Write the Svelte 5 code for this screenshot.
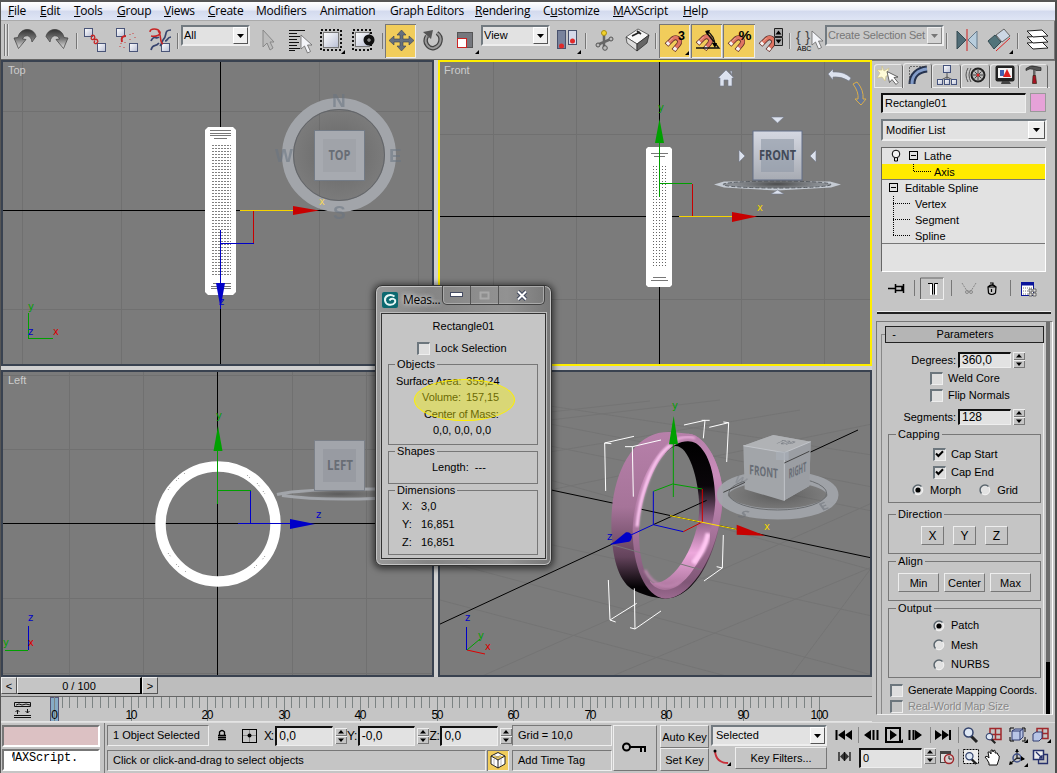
<script>
  const menus = [
    ['F', 'ile', 32], ['E', 'dit', 34], ['T', 'ools', 43], ['G', 'roup', 47], ['V', 'iews', 44],
    ['C', 'reate', 48], ['', 'Modifiers', 64], ['', 'Animation', 70], ['', 'Graph Editors', 85],
    ['R', 'endering', 68], ['C', 'ustomize', 70, 'u'], ['M', 'AXScript', 70], ['H', 'elp', 40]
  ];
  const frames = Array.from({ length: 101 }, (_, i) => i);
  const marks = [0, 10, 20, 30, 40, 50, 60, 70, 80, 90, 100];
  const fx = (f) => 54.5 + Math.round(f * 7.65);
</script>

{#snippet spin()}
  <span class="spin"><svg width="12" height="8" viewBox="0 0 12 8"><path d="M6 2 9 5.500H3z" /></svg><svg width="12" height="8" viewBox="0 0 12 8"><path d="M3 2.500h6L6 6z" /></svg></span>
{/snippet}
{#snippet check(on)}
  <span class="check">{#if on}<svg width="9" height="9" viewBox="0 0 9 9"><path d="M1 3.5 3.4 6 8 1.3" fill="none" stroke="#000" stroke-width="2" /></svg>{/if}</span>
{/snippet}
{#snippet radio(on)}
  <svg class="radio" width="12" height="12" viewBox="0 0 12 12"><circle cx="6" cy="6" r="4.8" fill="#e2e2e2" stroke="#f5f5f5" /><path d="M2.5 9.5A4.9 4.9 0 0 1 9.5 2.5" fill="none" stroke="#59646c" stroke-width="1.5" />{#if on}<circle cx="6" cy="6" r="2.6" />{/if}</svg>
{/snippet}
{#snippet drop(label, cls)}
  <div class="combo {cls}"><span>{label}</span><i><svg width="7" height="4" viewBox="0 0 7 4"><path d="M0 0h7L3.5 4z" /></svg></i></div>
{/snippet}
{#snippet sep(x)}
  <svg width="6" height="38" viewBox="{x} 21 6 38"><path d="M{x + 2.5} 33v16" stroke="#777" /><path d="M{x + 3.5} 33v16" stroke="#ddd" /></svg>
{/snippet}
{#snippet magnet(x, y)}
  <g transform="translate({x} {y})" fill="none"><path d="M2.500 8 8.500 2C12.500-1.500 18 3 14.500 7.500L9.500 13.500" stroke="#5c2d28" stroke-width="5" /><path d="M3 7.500 8.500 2C12.500-1.500 18 3 14.500 7.500L10 13" stroke="#df7462" stroke-width="3.400" /><path d="m3 7.500 2-2M10 13l2-2.400" stroke="#f4f4f4" stroke-width="3.400" /><path d="M5 4.500 8.500 1" stroke="#f4b09e" /></g>
{/snippet}
{#snippet arrow(x, y)}
  <path transform="translate({x} {y})" d="M0 0v14l3.500-3 3 7 3-1.500-3-6.500H11z" fill="#f3f4f8" stroke="#666" stroke-width=".8" />
{/snippet}
{#snippet box(x, y)}
  <rect {x} {y} width="8" height="8" fill="url(#pane)" stroke="#4a5578" />
{/snippet}
{#snippet zoomglass(x, y)}
  <g transform="translate({x} {y})"><path d="m8 9 6 6" stroke="#222" stroke-width="3" /><circle cx="5.500" cy="5.500" r="4.500" fill="#dfe8f4" stroke="#33436d" stroke-width="1.500" /></g>
{/snippet}

<main>
  <nav>
    {#each menus as m}
      <span style="width:{m[2]}px">{#if m[3]}C<u>u</u>stomize{:else}<u>{m[0]}</u>{m[1]}{/if}</span>
    {/each}
  </nav>

  <div class="toolbar">
    <svg width="10" height="38" viewBox="1 21 10 38">
      <defs>
        <linearGradient id="steel" x1="0" y1="0" x2="0" y2="1"><stop offset="0" stop-color="#333" /><stop offset=".5" stop-color="#777" /><stop offset="1" stop-color="#e4e4e4" /></linearGradient>
        <linearGradient id="pane" x1="0" y1="0" x2="1" y2="1"><stop offset="0" stop-color="#fff" /><stop offset="1" stop-color="#b9bfd4" /></linearGradient>
      </defs>
      <path d="M4.500 24v32M7.500 24v32" stroke="#777" /><path d="M5.500 24v32M8.500 24v32" stroke="#e2e2e2" />
    </svg>
    <svg width="31" height="38" viewBox="11 21 31 38"><path d="M14 38 18.500 48.500 26 39.500 22.500 39C24 34.500 31 34 32 42L36 36.500C34 27 20 27 18 37.500Z" fill="url(#steel)" stroke="#3c3c3c" stroke-width=".7" /></svg>
    <svg width="32" height="38" viewBox="42 21 32 38"><path d="M68 38 63.500 48.500 56 39.500 59.500 39C58 34.500 51 34 50 42L46 36.500C48 27 62 27 64 37.500Z" fill="url(#steel)" stroke="#3c3c3c" stroke-width=".7" /></svg>
    {@render sep(74)}
    <svg width="31" height="38" viewBox="80 21 31 38">{@render box(84.5, 28.5)}{@render box(97.5, 43.5)}<path d="M91 36c3-2 5 1 3 3s-4-1-2-2M94 40c3-2 5 1 3 3s-4-1-2-2" fill="none" stroke="#c72525" stroke-width="1.300" /></svg>
    <svg width="32" height="38" viewBox="111 21 32 38">{@render box(116.5, 28.5)}{@render box(129.5, 43.5)}<path d="M122 42c-1-4 0-6 4-6" fill="none" stroke="#c72525" stroke-width="2" /><path d="M130 34v1m3-2v1m2 3v1m-5 1v1m-9 3v1m4-2v1m-5 3v1m4 0v1" stroke="#c96a6a" stroke-width="1.500" /></svg>
    <svg width="32" height="38" viewBox="143 21 32 38">{@render box(161.5, 43.5)}<path d="M151 50c2-7 4-2 8-7M151 41c3-7 5-1 8-4M171 30c-8 0-3 6-8 10-2 3-1 4-3 6M171 37c-4 0-3 4-6 4" fill="none" stroke="#37446e" stroke-width="1.700" /><path d="M150 32c0-4 8-4 10 0 1 3-4 5-9 4M158 31c4 3 1 11 5 13" fill="none" stroke="#c72525" stroke-width="1.500" /></svg>
    {@render sep(175)}
    {@render drop('All', 'c69')}
    <svg width="34" height="38" viewBox="250 21 34 38"><path d="M263 30v17l4-4 3 7 3-2-3-6h4z" fill="#bcbcbc" stroke="#888" /></svg>
    <svg width="31" height="38" viewBox="284 21 31 38"><path d="M289 30.500h16M289 33.500h8M289 36.500h11M289 39.500h8M289 42.500h10M289 45.500h8M289 48.500h11M289 50.500h6" stroke="#111" />{@render arrow(301, 35)}</svg>
    <svg width="33" height="38" viewBox="315 21 33 38"><rect x="321" y="30" width="20" height="20" fill="none" stroke="#111" stroke-width="2" stroke-dasharray="2 2" /><rect x="323.500" y="32.500" width="15" height="15" fill="url(#pane)" stroke="#777" /><path d="M345 50v4h-4z" /></svg>
    <svg width="32" height="38" viewBox="348 21 32 38"><rect x="353" y="30" width="18" height="20" fill="none" stroke="#111" stroke-width="2" stroke-dasharray="2 2" /><rect x="355.500" y="32.500" width="14" height="14" fill="url(#pane)" stroke="#777" /><circle cx="369" cy="40" r="3.500" fill="#ccc" stroke="#111" stroke-width="4" /><circle cx="369" cy="40" r="1.500" fill="#888" /></svg>
    <span class="thinsep"></span>
    <svg class="on" width="31" height="34" viewBox="385 24 31 34"><path d="M401.500 30l4.500 5h-3v4h6v-3l5 4.500-5 4.500v-3h-6v4h3l-4.500 5-4.500-5h3v-4h-6v3l-5-4.500 5-4.500v3h6v-4h-3z" fill="#66707e" stroke="#3a4250" stroke-width=".6" /></svg>
    <svg width="33" height="38" viewBox="416 21 33 38"><path d="M427 36C423 43 429 49 434 48 441 46 443 37 437 33" fill="none" stroke="#444" stroke-width="4.500" /><path d="M427 36C423 43 429 49 434 48 441 46 443 37 437 33" fill="none" stroke="#999" stroke-width="2" /><path d="m423 32 10-2-2 9z" fill="#555" /></svg>
    <svg width="32" height="38" viewBox="449 21 32 38"><rect x="457.500" y="32.500" width="15" height="15" fill="#75777d" stroke="#555" /><rect x="457.500" y="38.500" width="9" height="9" fill="#fff" stroke="#c22" /><path d="M479 50v4h-4z" /></svg>
    {@render drop('View', 'c69')}
    <svg width="33" height="38" viewBox="550 21 33 38"><rect x="557.500" y="30.500" width="8" height="18" fill="#79839c" stroke="#48516c" /><rect x="568.500" y="30.500" width="8" height="14" fill="#d6daea" stroke="#48516c" /><circle cx="561.500" cy="46" r="2.500" fill="#e02a2a" /><circle cx="572.500" cy="41" r="2.500" fill="#e02a2a" /><path d="M581 50v4h-4z" /></svg>
    {@render sep(583)}
    <svg width="30" height="38" viewBox="589 21 30 38"><path d="M604 34v14M597 45l14-6" stroke="#666" stroke-width="2.500" /><g fill="#bbb" stroke="#555"><circle cx="598" cy="45" r="2" /><circle cx="611" cy="39" r="2" /><circle cx="605" cy="48" r="2.300" /></g><circle cx="604" cy="33" r="2.500" fill="#f2d32c" stroke="#a98e17" /></svg>
    <svg width="34" height="38" viewBox="619 21 34 38"><path d="m626 37 12-8 11 6-12 9z" fill="#f8f8f8" stroke="#333" stroke-width=".7" /><path d="M626 37 637 44V51L627 43z" fill="#ddd" stroke="#333" stroke-width=".7" /><path d="m637 44 12-9-2 8-10 8z" fill="#666" stroke="#222" stroke-width=".7" /><path d="m632 36 8-4m-3-1 4 3" stroke="#222" stroke-width="1.700" /></svg>
    {@render sep(653)}
    <svg class="on" width="31" height="34" viewBox="659 24 31 34">{@render magnet(664, 37)}<text x="678" y="40" class="bold" font-size="12.500">3</text><path d="M689 51v4h-4z" /></svg>
    <svg class="on" width="31" height="34" viewBox="691 24 31 34">{@render magnet(695, 36)}<path d="M696 48h23L706 32M707 31q8 5 8 15" fill="none" stroke="#111" stroke-width="1.300" /><path d="m705 31 5-1-2 5zM712 43h5l-2 5z" /></svg>
    <svg class="on" width="32" height="34" viewBox="723 24 32 34">{@render magnet(727, 37)}<text x="738.500" y="40" class="bold" font-size="13" textLength="13" lengthAdjust="spacingAndGlyphs">%</text></svg>
    <svg width="32" height="38" viewBox="755 21 32 38">{@render magnet(758, 37)}<path d="M774.500 28.500h8v8h-8zM774.500 37.500h8v8h-8z" fill="#aaa" stroke="#222" /><path d="m778.500 30.500 3 4h-6zM778.500 43.500l3-4h-6z" /></svg>
    {@render sep(787)}
    <svg width="32" height="38" viewBox="793 21 32 38"><text x="796" y="42" font-size="14" textLength="14" class="plain" fill="#444">&#123; &#125;</text><text x="797" y="51" font-size="7" class="plain">ABC</text>{@render arrow(812, 31)}</svg>
    {@render drop('Create Selection Set', 'c119')}
    {@render sep(944)}
    <svg width="32" height="38" viewBox="950 21 32 38"><path d="M957 31v18l9-9z" fill="#506c76" stroke="#354b52" /><path d="M977 31v18l-9-9z" fill="#b8cddd" stroke="#65798a" /><path d="M967 29v22" stroke="#c44" stroke-width="1.300" /></svg>
    <svg width="33" height="38" viewBox="982 21 33 38"><path d="m988 41 7-6 6 7-7 7z" fill="#51737a" stroke="#354b52" /><path d="m996 35 8-6 6 7-8 6z" fill="#ccd7e4" stroke="#666" /><path d="m996 51 14-13" stroke="#d22" /><path d="M1013 50v4h-4z" /></svg>
    {@render sep(1015)}
    <svg width="33" height="38" viewBox="1021 21 33 38"><g fill="#fff" stroke="#222"><path d="m1027 43 15-1 6 6-15 1z" /><path d="m1027 37 15-1 6 6-15 1z" /><path d="m1027 31 15-1 6 6-15 1z" /></g></svg>
  </div>

  <div class="middle">
    <div class="left">
      <div class="views">
        <svg class="view" width="433" height="306" viewBox="1 60 433 306">
          <defs>
            <pattern id="dots" x="211" width="3" height="3" patternUnits="userSpaceOnUse"><rect width="3" height="3" fill="#fff" /><rect x="1" y="1" width="2" height="1" fill="#808080" /></pattern>
            <pattern id="dots2" x="652" width="3" height="3" patternUnits="userSpaceOnUse"><rect width="3" height="3" fill="#fff" /><rect x="1" y="1" width="1" height="1" fill="#666" /></pattern>
            <linearGradient id="cube" x1="0" y1="0" x2="0" y2="1"><stop offset="0" stop-color="#d5d8e2" /><stop offset="1" stop-color="#a7abb3" /></linearGradient>
            <radialGradient id="shade"><stop offset="0" stop-color="#333" stop-opacity=".75" /><stop offset="1" stop-color="#444" stop-opacity="0" /></radialGradient>
          </defs>
          <path class="grid" d="M22.500 60v306M121.500 60v306M319.500 60v306M418.500 60v306M1 111.500h433M1 309.500h433" />
          <path class="axis" d="M220.500 60v306M1 210.500h433" />
          <path d="M208 127h25l3 3v162l-3 3h-25l-3-3V130z" fill="#fff" />
          <rect x="211" y="144" width="20" height="132" fill="url(#dots)" />
          <path d="M210 130.500h21M210 133.500h21M210 135.500h21M214 138.500h13M213 283.500h18M211 286.500h20M211 288.500h20" stroke="#777" />
          <circle cx="339" cy="155" r="51.500" fill="none" stroke="#a2a5aa" stroke-width="11" /><circle cx="339" cy="155" r="45.500" fill="none" stroke="#62656a" />
          <circle cx="339" cy="155" r="45" fill="url(#shade)" opacity=".45" />
          <rect x="314.500" y="130.500" width="50" height="50" fill="#a7aab0" stroke="#737b86" /><rect x="323" y="139" width="33" height="33" fill="#a0a3a9" />
          <text class="cubet" x="328.500" y="160" textLength="22" lengthAdjust="spacingAndGlyphs">TOP</text>
          <g class="compass"><text x="332" y="107">N</text><text x="275" y="162">W</text><text x="389" y="162">E</text><text x="333" y="219">S</text></g>
          <path d="M240 210.500h55" stroke="#f5d400" /><path d="M293 206v9l26-4.500z" fill="#c80000" /><path d="M253.500 211v32" stroke="#c80000" /><path d="M221 243.500h33" stroke="#0000c8" />
          <path d="M220.500 230v79" stroke="#0000c8" /><path d="M216 283h9l-4.500 25z" fill="#0000c8" />
          <text class="ax" x="319" y="205" fill="#f1d55a">x</text><text class="ax" x="219" y="305" fill="#0000c8">z</text>
          <path d="M28.500 313v26" stroke="#00a000" /><path d="M28 338.500h25" stroke="#00a000" /><text class="ax" x="28" y="310" fill="#00a000">y</text><text class="ax" x="53" y="335" fill="#d00">x</text><text class="ax" x="28" y="335" fill="#0000c8">z</text>
          <text class="vl" x="8" y="74">Top</text>
          <rect x="2" y="61" width="431" height="304" class="edge" />
        </svg>
        <svg class="view" width="434" height="306" viewBox="438 60 434 306">
          <path class="grid" d="M493.500 60v306M576.500 60v306M741.500 60v306M824.500 60v306M438 134.500h434M438 299.500h434" />
          <path class="axis" d="M659.500 60v306M438 216.500h434" />
          <path d="M648 147h22l2 2v136l-2 2h-22l-2-2V149z" fill="#fff" /><rect x="652" y="166" width="16" height="102" fill="url(#dots2)" />
          <path d="M651 153.500h17M654 156.500h11M653 277.500h13M651 280.500h17" stroke="#777" />
          <path d="m714 184.500 10-3h106l11 3-10 3-54 3-53-3z" fill="#c5cbd3" /><ellipse cx="777" cy="184.500" rx="54" ry="3.500" fill="#8b8f94" stroke="#5b6066" stroke-dasharray="4 2" /><ellipse cx="777" cy="184" rx="44" ry="5" fill="url(#shade)" />
          <rect x="753" y="131" width="49" height="49" fill="url(#cube)" stroke="#636f88" /><rect x="761" y="139" width="33" height="33" fill="#929ba9" opacity=".65" />
          <text class="cubet hot" x="759" y="160" textLength="37" lengthAdjust="spacingAndGlyphs">FRONT</text>
          <g fill="#dce2ee" stroke="#747b8b" stroke-width=".6"><path d="M771 117h13l-6.500 6zM771 194h13l-6.500-4zM739 150v12l6-6zM816 150v12l-6-6z" /><path d="m718 78 8-8 8 8h-2v8h-4v-6h-4v6h-4v-8zM730 71h2v4z" /><path d="m828 74 5-5v3q11-1 18 6l-2 3q-8-5-16-4v3z" /></g>
          <path d="m853 84 4-2q7 8 6 17h3l-5 6-6-6h3q1-7-5-15z" fill="#667796" stroke="#dcae48" />
          <path d="M659.500 127v70" stroke="#00a000" /><path d="M659.500 119 664 143h-9z" fill="#00a000" /><path d="M660 183.500h32" stroke="#00a000" /><path d="M692.500 184v32" stroke="#c80000" /><path d="M679 216.500h55" stroke="#f5d400" /><path d="M732 212v10l25-5.500z" fill="#c80000" />
          <text class="ax" x="658" y="111" fill="#00a000">y</text><text class="ax" x="757" y="211" fill="#f1d500">x</text>
          <text class="vl" x="444" y="74">Front</text>
          <rect x="439" y="61" width="432" height="304" class="edge active" />
        </svg>
        <svg class="view" width="433" height="307" viewBox="1 370 433 307">
          <path class="grid" d="M69.500 370v307M143.500 370v307M292.500 370v307M366.500 370v307M1 375.500h433M1 449.500h433M1 598.500h433M1 673.500h433" />
          <path class="axis" d="M217.500 370v307M1 523.500h433" />
          <circle cx="218" cy="524" r="57.500" fill="none" stroke="#fff" stroke-width="10.500" />
          <path d="m168 490 2-3m6-6 4-4m4-3 2-2M247 475l3 3m7 5 3 4m3 4 2 3M168 553l3 4m5 7 4 4m5 3 2 2M265 556l-3 4m-5 5-4 4" stroke="#888" stroke-dasharray="1 2" />
          <path d="M277 494.500Q300 489 375 489M282 495.500q35 5 93 3" fill="none" stroke="#a2a5aa" stroke-width="3" /><ellipse cx="339" cy="494" rx="42" ry="5" fill="url(#shade)" opacity=".6" />
          <rect x="314.500" y="440.500" width="50" height="50" fill="#a2a5ab" stroke="#7b8088" /><rect x="323" y="449" width="33" height="33" fill="#989ba2" />
          <text class="cubet" x="327" y="470" textLength="26" lengthAdjust="spacingAndGlyphs">LEFT</text>
          <path d="M217.500 437v67M218 490.500h33" stroke="#00a000" /><path d="M218 426l4.500 25h-9z" fill="#00a000" /><path d="M250.500 491v32M238 523.500h55" stroke="#0000c8" /><path d="M290 519v10l25-5z" fill="#0000c8" />
          <text class="ax" x="216" y="419" fill="#00a000">y</text><text class="ax" x="316" y="518" fill="#0000c8">z</text>
          <path d="M28.500 626v24" stroke="#0000c8" /><path d="M5 650.500h23" stroke="#00a000" /><text class="ax" x="28" y="621" fill="#0000c8">z</text><text class="ax" x="3" y="646" fill="#00a000">y</text><text class="ax" x="28" y="646" fill="#d00">x</text>
          <text class="vl" x="8" y="384">Left</text>
          <rect x="2" y="371" width="431" height="305" class="edge" />
        </svg>
        <svg class="view" width="434" height="307" viewBox="438 370 434 307">
          <defs>
            <linearGradient id="band" x1="0" y1="0" x2="0" y2="1"><stop offset="0" stop-color="#b780aa" /><stop offset=".45" stop-color="#a67499" /><stop offset=".75" stop-color="#63435b" /><stop offset=".93" stop-color="#050305" /></linearGradient>
            <linearGradient id="inner" x1="0" y1="0" x2="0" y2="1"><stop offset="0" stop-color="#000" /><stop offset=".3" stop-color="#0a060a" /><stop offset=".5" stop-color="#82587a" /><stop offset=".75" stop-color="#eda8dc" /><stop offset="1" stop-color="#a87299" /></linearGradient>
            <linearGradient id="rim" x1="0" y1="0" x2="0" y2="1"><stop offset="0" stop-color="#b780aa" /><stop offset=".25" stop-color="#c98dbb" /><stop offset=".6" stop-color="#a6739a" /><stop offset=".9" stop-color="#805777" /><stop offset="1" stop-color="#9c6a90" /></linearGradient>
            <filter id="soft"><feGaussianBlur stdDeviation="3" /></filter>
          </defs>
          <path class="grid faint" d="M550 406 872 455M550 424 872 487M550 446 872 511M550 480 872 570M440 520 872 616M440 560 872 675M440 600 730 677M550 420 720 400M550 452 800 410M550 490 872 424M480 677 872 503M610 677 872 567M790 677 872 567M550 412 650 401" />
          <path class="axis" d="M438 625 858 430M438 466 872 558" />
          <g transform="translate(590 390) scale(.33333)">
            <path d="M64 400C64 260 120 150 205 129 240 122 270 130 295 131 350 135 395 230 398 310 398 450 330 625 225 626 190 624 150 612 125 597 85 570 64 500 64 400Z" fill="url(#band)" />
            <path d="M128 420C130 310 190 150 295 131 350 135 395 230 398 310 398 450 320 625 225 626 165 620 128 530 128 420Z" fill="url(#rim)" />
            <path d="M225 192C252 158 292 145 318 160 360 190 374 260 376 330 372 450 300 600 225 600 205 598 190 590 180 575L260 400Z" fill="url(#inner)" />
            <path d="M147 420C150 320 200 190 255 168 295 165 325 260 328 350 328 450 260 580 190 580 160 560 147 500 147 420Z" fill="#7b7b7b" />
            <path d="M141 410C149 315 190 200 242 166" fill="none" stroke="#ffc9f4" stroke-width="9" filter="url(#soft)" />
            <path d="M240 160Q280 133 315 145" fill="none" stroke="#f3b4e3" stroke-width="6" filter="url(#soft)" />
            <path d="M355 430C345 480 325 500 310 520" fill="none" stroke="#ffc6f2" stroke-width="16" filter="url(#soft)" />
            <path d="M165 540C190 590 235 600 270 575" fill="none" stroke="#bd84ae" stroke-width="8" filter="url(#soft)" />
            <g fill="none" stroke-width="3">
              <path d="M155 358 330 396M190 404 350 331" stroke="#000" /><path d="M66 464 335 540" stroke="#777" />
              <path d="M132 139 44 159 47 303M64 161 44 159M213 150 127 170H105M127 170 130 320M282 105 345 91 340 145M335 91h24M358 112 416 98 410 216M400 96l16 2M400 435 397 534 342 573M380 530l17 4M55 570 60 690 140 640M60 690l17 6M133 595 135 717 213 663M120 713l15 4" stroke="#fff" />
              <path d="M250 100V321M190 304 248 282 337 297" stroke="#00a000" /><path d="M190 304V404L280 425M190 404 62 463" stroke="#0000d0" /><path d="M337 297V396L280 425" stroke="#d00000" /><path d="M240 377 440 418" stroke="#ffe100" />
            </g>
            <path d="M251 78 264 163H237Z" fill="#00a000" /><path d="M440 404 525 437 440 434Z" fill="#c80000" /><path d="M62 464 108 427Q122 424 126 440 124 456 112 456Z" fill="#0000c8" />
            <ellipse cx="563" cy="315" rx="166" ry="57" fill="none" stroke="#a2a5aa" stroke-width="33" opacity=".92" />
            <ellipse cx="563" cy="310" rx="147" ry="50" fill="none" stroke="#6a6d70" stroke-width="3" /><ellipse cx="563" cy="315" rx="140" ry="48" fill="url(#shade)" opacity=".6" />
            <path d="M460 167 550 135 662 155 658 288 581 332 464 298Z" fill="#a2a5a9" /><path d="M460 167 550 135 662 155 583 188Z" fill="#b0b2b5" /><path d="M583 188 662 155 658 288 581 332Z" fill="#9b9ea3" /><path d="M460 167 583 188V332M583 188 662 155" fill="none" stroke="#c2c5ca" stroke-width="3" />
            <path d="M583 219 658 184M400 307 465 277" stroke="#444" stroke-width="3" /><rect x="558" y="185" width="38" height="25" fill="#a9afb8" opacity=".7" />
            <text class="cubet iso3" transform="matrix(1 .14 0 1 478 253)" textLength="86" lengthAdjust="spacingAndGlyphs">FRONT</text>
            <text class="cubet iso3" transform="matrix(1 -.43 0 1 596 266)" textLength="53" lengthAdjust="spacingAndGlyphs">RIGHT</text>
            <text class="cubet iso3" transform="matrix(1 .12 -.8 .35 554 160)" textLength="44" lengthAdjust="spacingAndGlyphs" opacity=".7">TOP</text>
            <text class="cubet iso3" transform="matrix(1 .2 -.7 .7 440 380)" opacity=".5">S</text><text class="cubet iso3" transform="matrix(1 -.4 .5 .7 697 363)" opacity=".5">E</text><text class="cubet iso3" transform="matrix(.8 .3 -.5 .7 430 275)" opacity=".3">W</text>
          </g>
          <text class="ax" x="672" y="409" fill="#00a000">y</text><text class="ax" x="764" y="530" fill="#f1d500">x</text><text class="ax" x="607" y="540" fill="#0000c8">z</text>
          <path d="M466.500 627v23" stroke="#0000c8" /><path d="m467 650 18 4" stroke="#d00" /><path d="m467 650 13-11" stroke="#00a000" /><text class="ax" x="465" y="621" fill="#0000c8">z</text><text class="ax" x="478" y="639" fill="#00a000">y</text><text class="ax" x="485" y="650" fill="#d00">x</text>
          <rect x="439" y="371" width="432" height="305" class="edge" />
        </svg>
      </div>
      <div class="slider"><b>&lt;</b><b class="thumb">0 / 100</b><b>&gt;</b></div>
      <svg class="track" width="871" height="25" viewBox="1 697 871 25">
        <g fill="none" stroke="#111"><path d="M14.500 702.500h16v4h-16zM14 715.500h17M14 717.500h17" /><path d="m16 705 3-1 3 1 4-1 4 1M17.500 714v-4m-2 2 2-2 2 2M27.500 709v4m-2-2 2 2 2-2" /></g>
        <rect x="50.500" y="697.500" width="8" height="24" fill="#86abc6" stroke="#557" />
        {#each frames as f}<path d="M{fx(f)} 697v{f % 10 ? 11 : 24}" stroke="#7c8383" />{/each}
        {#each marks as m}<text x={fx(m)} y="719" text-anchor="middle" font-size="12" textLength={m === 0 ? 6 : m === 100 ? 18 : 12} class="plain">{m}</text>{/each}
        <path d="M1 721.500h871" stroke="#e4e4e4" />
      </svg>
    </div>

    <aside>
      <div class="tabs">
        <svg width="29" height="24" viewBox="874 64 29 24"><path d="m882 66 2 5 5-3-2 5 4 2-5 1-1 5-3-4-5 1 3-5-3-3 5 0z" fill="#fffbd8" stroke="#cfc389" stroke-width=".7" /><path d="m887 71.500 11 5.500-4 .500 4 5-2 2-4-5-2.500 3z" fill="#fff" stroke="#444" stroke-width=".8" /></svg>
        <svg class="act" width="29" height="25" viewBox="903 63 29 25"><path d="M912 84C912 75 918 70 927 69" fill="none" stroke="#26334f" stroke-width="7" /><path d="M912 84C912 75 918 70 927 69" fill="none" stroke="#839cc8" stroke-width="3" /><path d="M909.500 84V66.500h17" fill="none" stroke="#444" stroke-width=".7" stroke-dasharray="2 1" /></svg>
        <svg width="29" height="24" viewBox="932 64 29 24"><path d="M947 72v5m0 0-8 4m8-4v4m0-4 8 4" stroke="#555" /><g fill="url(#pane)" stroke="#44527c"><rect x="943.500" y="65.500" width="7" height="7" /><rect x="937.500" y="79.500" width="5" height="5" /><rect x="944.500" y="79.500" width="5" height="5" /><rect x="951.500" y="79.500" width="5" height="5" /></g></svg>
        <svg width="29" height="24" viewBox="961 64 29 24"><path d="M968 68q-4 7 0 14M971 68q-4 7 0 14" fill="none" stroke="#555" /><circle cx="978" cy="75" r="6.500" fill="#bbb" stroke="#222" stroke-width="2" /><path d="M978 70v10m-5-5h10m-8.500-3.500 7 7m0-7-7 7" stroke="#444" /><circle cx="978" cy="75" r="1.500" fill="#d22" /></svg>
        <svg width="29" height="24" viewBox="990 64 29 24"><rect x="995.500" y="65.500" width="19" height="16" rx="2" fill="#222" /><rect x="998" y="68" width="14" height="10" fill="#f4f4f4" /><path d="M1000 70h4v6h-4z" fill="#4060b0" /><path d="m1007 69 4 8h-8z" fill="#d22" /><path d="M1002 81h7l2 3h-10z" fill="#444" /></svg>
        <svg width="29" height="24" viewBox="1019 64 29 24"><path d="M1026 68.500q5-4 10-2l5 1v3h-5l-2-1q-4-2-8 1z" fill="#555" stroke="#222" stroke-width=".7" /><path d="M1033 70h2.500v6h-2.500z" fill="#666" /><path d="M1033 75.500h2.500l1 8h-4z" fill="#a12" stroke="#321" stroke-width=".7" /></svg>
      </div>
      <div class="namerow"><div class="field name">Rectangle01</div><span class="swatch"></span></div>
      {@render drop('Modifier List', 'mod')}
      <div class="stack">
        <div class="row"><svg width="42" height="16" viewBox="882 148 42 16"><circle cx="896" cy="154" r="3.800" fill="#f4f4f4" stroke="#000" /><path d="M894.500 158v3h3v-3" fill="none" stroke="#000" /><rect x="909.500" y="151.500" width="8" height="8" fill="none" stroke="#000" /><path d="M911 155.500h5" stroke="#000" /></svg><span>Lathe</span></div>
        <div class="row hot"><svg width="52" height="16" viewBox="882 164 52 16"><path d="M913.500 162v9.500H931" fill="none" stroke="#000" stroke-dasharray="1 1" /></svg><span>Axis</span></div>
        <div class="row"><svg width="23" height="16" viewBox="882 180 23 16"><rect x="889.500" y="183.500" width="8" height="8" fill="none" stroke="#000" /><path d="M891 187.500h5" stroke="#000" /></svg><span>Editable Spline</span></div>
        {#each ['Vertex', 'Segment', 'Spline'] as s, i}
          <div class="row" class:last={i === 2}><svg width="33" height="16" viewBox="882 196 33 16"><path d="M893.500 {i ? 196 : 194}V{i === 2 ? 204 : 212}M893 203.500h17" fill="none" stroke="#000" stroke-dasharray="1 1" /></svg><span>{s}</span></div>
        {/each}
      </div>
      <svg class="stacktools" width="175" height="30" viewBox="876 273 175 30">
        <path d="M888 288.500h7M895.500 284v9M896 286.500h6v4h-6M903.500 284v9" fill="none" stroke="#000" stroke-width="1.500" />
        <path d="M914.500 280v16M951.500 280v16M1010.500 280v16" stroke="#777" /><path d="M920.500 300v-22h23" fill="none" stroke="#666" /><path d="M920 299.500h23.500V278" fill="none" stroke="#eee" />
        <path d="M930 284h2v11h-2zM935 284h2v11h-2z" fill="#fff" /><path d="M928 283.500h4.500v11M938 283.500h-3.500v11" fill="none" stroke="#000" />
        <path d="m962 283 5 8 4 0 5-8" fill="none" stroke="#888" stroke-dasharray="2 1" /><circle cx="967" cy="292" r="1.500" fill="none" stroke="#888" /><circle cx="971" cy="292" r="1.500" fill="none" stroke="#888" />
        <path d="M988 287h8l-.500 6q-4 3-7 0zM988 287q4-4 8 0M990 283l3 0 0 3M991.500 289v3" fill="none" stroke="#000" stroke-width="1.200" />
        <rect x="1021.500" y="282.500" width="12" height="13" fill="#fff" stroke="#0a149a" /><path d="M1021 284h13" stroke="#0a149a" stroke-width="3" /><path d="M1023 288h10m-10 3h5m-5 3h5" stroke="#777" stroke-dasharray="1 1" /><path d="M1029 289h3v3h-3zM1033 289h3v3h-3zM1029 293h3v3h-3zM1033 293h3v3h-3z" fill="#ddd" stroke="#444" stroke-width=".700" />
      </svg>
      <div class="rule"></div>
      <div class="rollbox">
        <div class="rollout">
          <div class="head"><span>-</span><strong>Parameters</strong></div>
          <div class="num deg"><span>Degrees:</span><div class="field">360,0</div>{@render spin()}</div>
          <label class="weld">{@render check(false)}Weld Core</label>
          <label class="weld">{@render check(false)}Flip Normals</label>
          <div class="num seg"><span>Segments:</span><div class="field">128</div>{@render spin()}</div>
          <fieldset class="cap"><legend>Capping</legend>
            <label>{@render check(true)}Cap Start</label><label>{@render check(true)}Cap End</label>
            <div class="two"><label>{@render radio(true)}Morph</label><label>{@render radio(false)}Grid</label></div>
          </fieldset>
          <fieldset class="dir"><legend>Direction</legend><div><button>X</button><button>Y</button><button>Z</button></div></fieldset>
          <fieldset class="align"><legend>Align</legend><div><button>Min</button><button>Center</button><button>Max</button></div></fieldset>
          <fieldset class="out"><legend>Output</legend><label>{@render radio(true)}Patch</label><label>{@render radio(false)}Mesh</label><label>{@render radio(false)}NURBS</label></fieldset>
          <label class="gen">{@render check(false)}Generate Mapping Coords.</label>
          <label class="gen dis">{@render check(false)}Real-World Map Size</label>
        </div>
        <div class="bar"><i></i></div>
      </div>
    </aside>
  </div>

  <footer>
    <div class="listener"><div class="pink"></div><div class="white"><span>MAXScript.</span></div></div>
    <div class="status">
      <div class="line">
        <div class="cell sel">1 Object Selected</div>
        <svg width="66" height="22" viewBox="211 725 66 22"><path d="M221.500 735v-3q2.500-3 5 0v3" fill="none" stroke="#000" stroke-width="1.300" /><path d="M220 735.500h8M220 737.500h8M220 739.500h8" stroke="#000" stroke-width="1.300" /><rect x="244.500" y="729.500" width="14" height="13" fill="none" stroke="#000" /><path d="M251.500 730v12M245 735.500h13" stroke="#888" /><circle cx="251.500" cy="735.500" r="2" /><text x="266" y="740" font-size="12" textLength="10" class="plain">X:</text></svg>
        <div class="field coord">0,0</div>{@render spin()}<span class="lab">Y:</span><div class="field coord">-0,0</div>{@render spin()}<span class="lab">Z:</span><div class="field coord">0,0</div>{@render spin()}
      </div>
      <div class="line second"><div class="cell prompt">Click or click-and-drag to select objects</div>
        <svg class="iso" width="22" height="21" viewBox="488 751 22 21"><path d="m499 753.500 7 3.500v8l-7 4-7-4v-8zM492 757l7 4 7-4M499 761v8" fill="#fff" stroke="#222" /><path d="m495 756 7 4v7M502 756l-7 4v7" stroke="#888" fill="none" stroke-width=".600" /></svg>
      </div>
    </div>
    <div class="col gridcol"><div class="cell">Grid = 10,0</div><div class="cell">Add Time Tag</div></div>
    <button class="bigkey"><svg width="28" height="14" viewBox="0 0 28 14"><circle cx="5.500" cy="6" r="3.500" fill="none" stroke="#000" stroke-width="2" /><path d="M9 6h16M20 6v5M24 6v5" stroke="#000" stroke-width="2" /></svg></button>
    <div class="col keys"><button>Auto Key</button><button>Set Key</button></div>
    <div class="col filt">{@render drop('Selected', 'c116')}
      <div class="frow"><svg width="24" height="21" viewBox="713 749 24 21"><path d="M717 753q1 12 13 12" fill="none" stroke="#c8303a" stroke-width="2" /><circle cx="717" cy="753" r="1.500" /><path d="M733 764v4h-4z" /></svg><button>Key Filters...</button></div>
    </div>
    <div class="col play">
      <div class="prow">
        <svg width="127" height="25" viewBox="829 724 127 25"><path d="M836.500 731v10" stroke="#000" stroke-width="2" /><path d="M858.500 728v16M930.500 728v16" stroke="#888" /><path d="M845 731v10l-7-5zM852 731v10l-7-5zM871 731v10l-7-5zM915 731v10l7-5zM935 731v10l7-5zM942 731v10l7-5z" /><path d="M873.500 731v10M877.500 731v10M909.500 731v10M913.500 731v10M950 731v10" stroke="#000" stroke-width="2" /><rect x="886" y="729" width="14" height="14" fill="none" stroke="#000" stroke-width="2" /><path d="m890 731 7 5-7 5zM903 740v4h-4z" /></svg>
        <svg width="98" height="25" viewBox="956 724 98 25"><path d="M958.500 728v16" stroke="#888" />{@render zoomglass(963, 728)}<path d="M990 729.500h11v11h-11zM995.500 729v11M990 735.500h11" fill="none" stroke="#a0282c" stroke-width="1.500" /><g transform="translate(289 220) scale(.700)">{@render zoomglass(995, 734)}</g><path d="m1012 732 3-2h8v8l-3 3h-8zM1012 732h8v9M1020 732l3-2" fill="#b8c5e6" stroke="#303c70" /><path d="M1010 733v-4h4m8 0h3v4m-15 5v4h4m11-4v4h-3" fill="none" stroke="#000" /><path d="M1037 729.500h11v10h-11zM1042.500 729v10M1037 734.500h11" fill="none" stroke="#a0282c" stroke-width="1.500" /><path d="m1033 735 3-2h6v6l-3 3h-6z" fill="#b8c5e6" stroke="#303c70" /><path d="M1028 740v4h-4zM1051 740v4h-4z" /></svg>
      </div>
      <div class="prow">
        <svg width="30" height="22" viewBox="829 748 30 22"><path d="M839 752v9M844.500 752v9M850 752v9" stroke="#111" stroke-width="1.300" /><path d="M844 752.500v8l-4-4zM845 752.500v8l4-4z" fill="#333" /></svg>
        <div class="field frame">0</div>{@render spin()}
        <svg width="21" height="22" viewBox="936 749 21 22"><rect x="940.500" y="752.500" width="10" height="11" fill="#ddd" stroke="#444" /><path d="M940 754h11" stroke="#444" stroke-width="2" /><circle cx="949" cy="760" r="4.500" fill="#d8d0d0" stroke="#a0282c" stroke-width="1.500" /><path d="M949 757v3h3" fill="none" stroke="#222" /></svg>
        <svg width="98" height="22" viewBox="957 749 98 22"><path d="M958.500 750v18" stroke="#888" /><rect x="963.500" y="750.500" width="15" height="14" fill="#eee" stroke="#000" stroke-dasharray="2 1" /><g transform="translate(193 152) scale(.800)">{@render zoomglass(965, 751)}</g><path d="M989 764q-2-4-4-6 2-2 4 1l-1-6q2-1 3 2v-4q2-1 2 2l1-2q2 0 1 3 3-1 3 2 2 0 1 4l-2 6h-8z" fill="#fff" stroke="#111" /><path d="M1017 750v9l-6 5M1017 759l7 1" stroke="#222" stroke-width="1.300" fill="none" /><circle cx="1017" cy="759" r="4" fill="none" stroke="#405087" stroke-width="1.500" /><path d="m1009 766 1-4 3 3zM1021 757l4 3-4 2zM1015 753l2-3 2 3zM1028 764v4h-4z" /><rect x="1033.500" y="751.500" width="10" height="9" fill="#eee" stroke="#26306c" stroke-width="1.500" /><path d="M1044 755.500h3.500v9h-9V761M1036 753l6 6m0-3v3h-3" fill="none" stroke="#26306c" stroke-width="1.300" /></svg>
      </div>
    </div>
  </footer>

  <section class="dialog">
    <header>
      <svg width="16" height="16" viewBox="0 0 16 16"><rect width="16" height="16" rx="2" fill="#0c6970" /><path d="M12.500 4.500C8 1 2.500 4 3 8.500s7 6 10 2c1.500-4-4-5-5.500-2" fill="none" stroke="#e8f8f6" stroke-width="2" /></svg>
      <span>Meas...</span>
      <div class="wbtns"><i><svg width="13" height="6" viewBox="0 0 13 6"><rect x=".500" y=".500" width="12" height="4" fill="#fff" stroke="#444b62" /></svg></i><i><svg width="11" height="9" viewBox="0 0 11 9"><rect x="1.500" y="1.500" width="8" height="6" fill="none" stroke="#a9a9a9" stroke-width="2" /></svg></i><i class="wide"><svg width="12" height="11" viewBox="0 0 12 11"><path d="m2 1.500 8 8m0-8-8 8" stroke="#3e465d" stroke-width="4" /><path d="m2 1.500 8 8m0-8-8 8" stroke="#fff" stroke-width="2" /></svg></i></div>
    </header>
    <div class="body">
      <p class="objname">Rectangle01</p>
      <label class="lock">{@render check(false)}Lock Selection</label>
      <fieldset class="objs"><legend>Objects</legend><p class="sa"><span>Surface Area:</span><span>359,24</span></p><p class="vo"><span>Volume:</span><span>157,15</span></p><p class="cm">Center of Mass:</p><p class="zz">0,0, 0,0, 0,0</p></fieldset>
      <fieldset class="shp"><legend>Shapes</legend><p>Length: &nbsp;---</p></fieldset>
      <fieldset class="dims"><legend>Dimensions</legend><p><span>X:</span>3,0</p><p><span>Y:</span>16,851</p><p><span>Z:</span>16,851</p></fieldset>
    </div>
    <div class="halo"></div>
  </section>
</main>

<style>
  :global(body) { background: #c5c5c5; overflow: hidden; margin: 0; }
  main { box-sizing: border-box; width: 1057px; height: 773px; position: relative; display: flex; flex-direction: column; background: #c5c5c5; border-left: 1px solid #555; border-top: 2px solid #555; border-right: 2px solid #4d4d4d; font: 11px/13px 'Liberation Sans', sans-serif; color: #000; overflow: hidden; }
  main *, main { box-sizing: border-box; }
  svg { display: block; flex: none; }
  p { margin: 0; }
  nav { display: flex; height: 19px; padding-left: 7px; background: linear-gradient(#fff, #e9edf8 45%, #d3daee 50%, #dfe5f5); border-bottom: 1px solid #aaa; font: 12px/18px 'Open Sans', sans-serif; letter-spacing: -.25px; white-space: nowrap; flex: none; }
  nav span { flex: none; }
  .toolbar { display: flex; height: 39px; border-bottom: 1px solid #666; border-right: 1px solid #777; flex: none; align-items: flex-start; }
  .toolbar .on { margin-top: 3px; background: #f1cd5b; box-shadow: inset 1px 1px #777, inset -1px -1px #eee; }
  .toolbar .on + .on { margin-left: 1px; }
  .thinsep { width: 2px; margin: 12px 1px 0 2px; height: 16px; border-left: 1px solid #777; }
  .combo { display: flex; align-items: center; justify-content: space-between; background: #e2e2e2; border: 2px solid; border-color: #727a80 #eee #eee #727a80; padding-left: 3px; flex: none; white-space: nowrap; overflow: hidden; }
  .combo i { width: 15px; align-self: stretch; display: flex; align-items: center; justify-content: center; background: #f0f0f0; border: 1px solid; border-color: #fff #555 #555 #fff; flex: none; }
  .c69 { width: 69px; height: 21px; margin-top: 4px; padding-left: 1px; }
  .c119 { width: 119px; height: 21px; margin-top: 4px; color: #777; background: #c9c9c9; padding-left: 1px; letter-spacing: -.2px; }
  .c119 path { fill: #777; }
  .c119 i { background: #d4d4d4; border-color: #eee #888 #888 #eee; }
  .plain, .bold { font-family: 'Liberation Sans', sans-serif; }
  .bold { font-weight: bold; }
  .middle { display: flex; height: 662px; flex: none; }
  .left { width: 871px; flex: none; }
  .views { display: grid; grid-template-columns: 433px 434px; gap: 4px; background: #d0d0d0; }
  .view { background: #7b7b7b; font-family: 'DejaVu Sans', sans-serif; }
  .grid { fill: none; stroke: #707070; }
  .grid.faint { stroke: #747474; }
  .axis { fill: none; stroke: #000; }
  .edge { fill: none; stroke: #394250; stroke-width: 2; }
  .edge.active { stroke: #ffee00; }
  .vl { font: 11px 'Liberation Sans', sans-serif; fill: #ccc; }
  .ax { font: 10px 'DejaVu Sans', sans-serif; }
  .cubet { font-family: 'Open Sans', sans-serif; font-size: 14px; font-weight: bold; fill: #686d75; }
  .cubet.iso3 { font-size: 40px; }
  .cubet.hot { fill: #424a58; }
  .compass { font: bold 19px 'Liberation Sans', sans-serif; fill: #697482; opacity: .55; }
  .slider { display: flex; height: 20px; background: #bdbdbd; border-bottom: 1px solid #666; }
  b { font-weight: normal; width: 16px; height: 17px; text-align: center; line-height: 16px; border: 1px solid; border-color: #eee #555 #555 #eee; background: #c5c5c5; }
  .thumb { width: 125px; border-color: #eee #000 #000 #eee; border-right-width: 2px; }
  aside { width: 183px; padding: 2px 0 0 2px; flex: none; border-top: 1px solid #777; }
  .tabs { display: flex; height: 25px; border-bottom: 1px solid #eee; width: 176px; }
  .tabs svg { box-shadow: inset 1px 1px #e8e8e8, inset -1px 0 #666; border-radius: 3px 3px 0 0; margin-top: 1px; }
  .tabs .act { margin-top: 0; background: #c5c5c5; }
  .field { background: #e2e2e2; border: 1px solid; border-width: 2px 1px 1px 2px; border-color: #111 #eee #eee #111; white-space: nowrap; }
  .namerow { display: flex; padding: 5px 0 0 7px; gap: 4px; }
  .name { width: 145px; height: 20px; padding: 2px; }
  .swatch { width: 16px; height: 19px; background: #e6a2d8; border: 1px solid #999; }
  .mod { width: 166px; height: 22px; margin: 6px 0 0 7px; }
  .mod i { width: 17px; }
  .stack { width: 165px; height: 125px; margin: 6px 0 0 7px; background: #e2e2e2; border: 1px solid; border-color: #666 #fff #fff #666; }
  .row { display: flex; height: 16px; align-items: center; }
  .row.hot { background: #ffea00; box-shadow: inset 0 -1px #777; }
  .row.last { box-shadow: inset 0 -1px #777; }
  .stacktools { margin: 1px 0 0 2px; }
  .rule { width: 174px; height: 3px; margin: 8px 0 0 3px; border-top: 1px solid #eee; background: #222; }
  .rollbox { width: 177px; height: 394px; margin: 7px 0 0 2px; display: flex; border: 1px solid; border-color: #777 #fff #eee #777; padding: 4px 0 0 3px; }
  .rollout { width: 166px; height: 388px; position: relative; }
  .rollout::before { content: ''; position: absolute; inset: 8px 2px 0 1px; border: 1px solid #888; border-bottom: 0; border-right-color: #eee; pointer-events: none; }
  .head { position: relative; display: flex; width: 159px; height: 17px; margin-left: 5px; border: 1px solid #222; background: #b5b5b5; line-height: 15px; }
  .head span { width: 16px; text-align: center; }
  .head strong { font-weight: normal; flex: 1; text-align: center; padding-right: 15px; }
  .num { display: flex; align-items: center; justify-content: flex-end; height: 18px; padding-right: 21px; }
  .num .field { width: 53px; height: 16px; line-height: 13px; padding-left: 2px; margin: 0 2px; font-size: 12px; }
  .deg { margin: 8px 0 1px; }
  .seg { margin-top: 4px; }
  .spin { display: flex; flex-direction: column; width: 12px; height: 16px; flex: none; }
  .spin svg { box-shadow: inset 1px 1px #eee, inset -1px -1px #777; }
  label { display: flex; align-items: center; white-space: nowrap; }
  .check { width: 13px; height: 13px; border: 2px solid; border-width: 2px 1px 1px 2px; border-color: #6c767d #eee #eee #6c767d; background: #dedede; display: inline-flex; margin-right: 5px; flex: none; }
  .radio { margin-right: 6px; }
  .weld { height: 17px; padding-left: 50px; }
  fieldset { margin: 0; padding: 0; border: 1px solid #777; min-width: 0; }
  legend { margin-left: 7px; padding: 0 2px; height: 12px; line-height: 13px; letter-spacing: .1px; }
  .rollout fieldset { margin-left: 8px; width: 153px; }
  .rollout .cap { margin-top: 2px; height: 75px; padding-top: 5px; }
  .cap label { height: 18px; padding-left: 44px; }
  .two { display: flex; }
  .two label { padding-left: 23px; }
  .two label + label { padding-left: 18px; }
  .rollout .dir { margin-top: 5px; height: 46px; padding-top: 6px; }
  .dir > div { display: flex; gap: 9px; padding-left: 32px; }
  button { font: 11px/12px 'Liberation Sans', sans-serif; padding: 0; margin: 0; color: #000; background: #c5c5c5; border: 1px solid; border-color: #eee #777 #777 #eee; white-space: nowrap; border-radius: 0; }
  .dir button { width: 23px; height: 19px; font-size: 12px; }
  .rollout .align { margin-top: 1px; height: 46px; padding-top: 6px; }
  .align > div { display: flex; gap: 5px; padding-left: 9px; }
  .align button { width: 41px; height: 19px; }
  .rollout .out { margin-top: 1px; height: 76px; padding-top: 2px; }
  .out label { height: 19.500px; padding-left: 44px; }
  .gen { height: 16px; padding-left: 10px; margin-top: 0; letter-spacing: -.15px; }
  .gen:not(.dis) { margin-top: 4px; }
  .dis { color: #888; text-shadow: 1px 1px #e4e4e4; }
  .dis .check { background: #c5c5c5; }
  .bar { width: 4px; background: #6e6e6e; height: 392px; margin-top: -4px; padding-top: 340px; }
  .bar i { display: block; height: 52px; background: #000; }
  footer { display: flex; height: 51px; flex: none; border-top: 1px solid #ddd; }
  .listener { width: 105px; padding: 2px 0 0 1px; border-right: 1px solid #777; display: flex; flex-direction: column; gap: 2px; }
  .listener div { width: 98px; height: 22px; border: 2px solid; border-color: #777 #fff #fff #777; }
  .pink { background: #dcc1c3; }
  .white { background: #fff; font: 12px/15px 'Liberation Mono', monospace; }
  .white span { display: block; margin-left: 8px; overflow: hidden; text-indent: -4px; letter-spacing: -.2px; }
  .status { width: 407px; padding-left: 2px; flex: none; }
  .line { display: flex; align-items: center; height: 25px; }
  .cell { border: 1px solid; border-color: #777 #eee #eee #777; height: 21px; line-height: 19px; padding-left: 5px; white-space: nowrap; }
  .sel { width: 103px; }
  .coord { width: 58px; height: 20px; line-height: 17px; padding-left: 2px; font-size: 12px; margin-right: 2px; }
  .lab { width: 11px; font-size: 12px; padding-top: 1px; letter-spacing: -.3px; }
  .prompt { width: 379px; margin-right: 1px; }
  .second { height: 25px; }
  .iso { background: #f1cd5b; box-shadow: inset 1px 1px #777, inset -1px -1px #eee; }
  .col { display: flex; flex-direction: column; flex: none; gap: 4px; padding-top: 2px; }
  .gridcol { width: 101px; padding-right: 1px; }
  .bigkey { width: 44px; height: 46px; margin-top: 2px; display: flex; align-items: center; justify-content: center; flex: none; margin-right: 3px; }
  .keys { width: 51px; gap: 0; }
  .keys button { width: 49px; height: 23px; }
  .c116 { width: 116px; height: 21px; }
  .filt { width: 118px; gap: 1px; }
  .frow { display: flex; }
  .frow button { flex: 1; height: 22px; margin-right: 2px; }
  .play { padding-top: 0; gap: 0; }
  .prow { display: flex; }
  .frame { width: 63px; height: 20px; line-height: 16px; padding-left: 2px; margin-right: 2px; }
  .dialog { position: absolute; left: 374px; top: 283px; width: 177px; height: 281px; border: 1px solid #333; border-radius: 7px; background: linear-gradient(90deg, #999, #858585 30%, #929292 75%, #777); box-shadow: inset 0 0 0 1px #c3c3c3, 0 1px 6px 2px rgba(0,0,0,.55); padding: 0 6px; }
  header { display: flex; height: 27px; align-items: center; font: 12px 'Open Sans', sans-serif; }
  header > span { width: 46px; padding-left: 5px; letter-spacing: -.3px; text-shadow: 0 0 5px #ddd, 0 0 5px #ddd; }
  .wbtns { display: flex; align-self: flex-start; height: 19px; border: 1px solid #444; border-top: 0; border-radius: 0 0 5px 5px; box-shadow: inset 0 0 0 1px #aaa; }
  .wbtns i { width: 28px; display: flex; align-items: center; justify-content: center; border-right: 1px solid #555; }
  .wbtns .wide { width: 45px; border: 0; }
  .body { height: 246px; width: 165px; margin-left: -1px; background: #c5c5c5; border: 1px solid #333; outline: 1px solid #bbb; padding: 6px 6px 0; }
  .objname { text-align: center; }
  .lock { height: 18px; margin-top: 6px; padding-left: 29px; }
  .body fieldset { width: 150px; }
  .body legend { margin-left: 6px; }
  .objs { height: 87px; margin-top: 1px; padding-top: 4px; }
  .objs p { display: flex; gap: 5px; height: 16.300px; line-height: 14px; white-space: nowrap; }
  .sa { padding-left: 7px; letter-spacing: -.1px; }
  .vo { padding-left: 33px; letter-spacing: -.1px; }
  .cm { padding-left: 35px; letter-spacing: -.2px; }
  .zz { padding-left: 44px; }
  .shp { height: 39px; padding-top: 4px; }
  .shp p { padding-left: 43px; }
  .dims { height: 71px; }
  .dims p { height: 18px; padding: 4px 0 0 13px; display: flex; }
  .dims p span { width: 19px; }
  .halo { position: absolute; left: 38px; top: 93px; width: 101px; height: 42px; border: 1px solid #fff000; border-radius: 50%; background: rgba(245,240,10,.42); }
</style>
